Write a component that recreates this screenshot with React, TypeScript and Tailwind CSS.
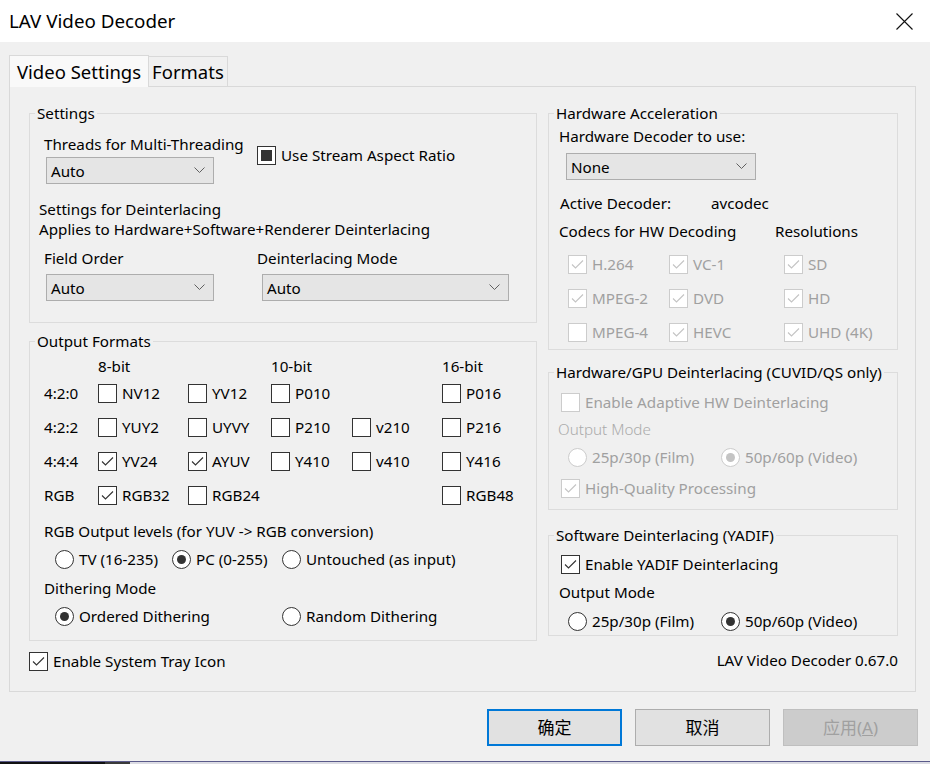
import React from 'react';

const FONT = "font-['Segoe_UI','Noto_Sans','Noto_Sans_CJK_SC',sans-serif]";

const Check: React.FC<{
  label: string;
  checked?: boolean;
  mixed?: boolean;
  disabled?: boolean;
  className?: string;
}> = ({ label, checked, mixed, disabled, className = '' }) => {
  const stroke = disabled ? '#c4c4c4' : '#333333';
  return (
    <div className={`flex items-center h-[20px] whitespace-nowrap ${className}`}>
      <span
        className={`w-[19px] h-[19px] shrink-0 border bg-white flex items-center justify-center ${
          disabled ? 'border-[#cccccc]' : 'border-[#333333]'
        }`}
      >
        {checked && (
          <svg width="17" height="17" viewBox="0 0 17 17">
            <polyline points="3,8.5 6.5,12 14,4.5" fill="none" stroke={stroke} strokeWidth="1.1" />
          </svg>
        )}
        {mixed && <span className="w-[11px] h-[11px] bg-[#333333]" />}
      </span>
      <span className={`ml-[5px] ${disabled ? 'text-[#a0a0a0]' : 'text-black'}`}>{label}</span>
    </div>
  );
};

const Radio: React.FC<{ label: string; selected?: boolean; disabled?: boolean; className?: string }> = ({
  label,
  selected,
  disabled,
  className = '',
}) => (
  <div className={`flex items-center h-[20px] whitespace-nowrap ${className}`}>
    <span
      className={`w-[19px] h-[19px] shrink-0 rounded-full border bg-white flex items-center justify-center ${
        disabled ? 'border-[#cccccc]' : 'border-[#333333]'
      }`}
    >
      {selected && (
        <span className={`w-[9px] h-[9px] rounded-full ${disabled ? 'bg-[#c4c4c4]' : 'bg-[#333333]'}`} />
      )}
    </span>
    <span className={`ml-[5px] ${disabled ? 'text-[#a0a0a0]' : 'text-black'}`}>{label}</span>
  </div>
);

const Combo: React.FC<{ value: string; className?: string }> = ({ value, className = '' }) => (
  <div
    className={`h-[27px] bg-[#e5e5e5] border border-[#adadad] flex items-center justify-between pl-[4px] pr-[8px] ${className}`}
  >
    <span>{value}</span>
    <svg width="11" height="7" viewBox="0 0 11 7">
      <polyline points="0.5,0.5 5.5,5.5 10.5,0.5" fill="none" stroke="#606060" strokeWidth="1" />
    </svg>
  </div>
);

const Group: React.FC<{ title: string; className?: string; children: React.ReactNode }> = ({
  title,
  className = '',
  children,
}) => (
  <fieldset className={`border border-[#dcdcdc] m-0 p-0 min-w-0 ${className}`}>
    <legend className="ml-[5px] px-[2px] leading-[20px] text-black">{title}</legend>
    {children}
  </fieldset>
);

const formatRows: { name: string; cells: ([string, boolean] | null)[] }[] = [
  { name: '4:2:0', cells: [['NV12', false], ['YV12', false], ['P010', false], null, ['P016', false]] },
  { name: '4:2:2', cells: [['YUY2', false], ['UYVY', false], ['P210', false], ['v210', false], ['P216', false]] },
  { name: '4:4:4', cells: [['YV24', true], ['AYUV', true], ['Y410', false], ['v410', false], ['Y416', false]] },
  { name: 'RGB', cells: [['RGB32', true], ['RGB24', false], null, null, ['RGB48', false]] },
];

const SettingsGroup: React.FC = () => (
  <Group title="Settings" className="h-[220px]">
    <div className="pl-[14px]">
      <div className="flex mt-[11px]">
        <div className="w-[213px]">
          <div className="h-[20px]">Threads for Multi-Threading</div>
          <Combo value="Auto" className="ml-[2px] mt-[3px] w-[168px]" />
        </div>
        <Check label="Use Stream Aspect Ratio" mixed className="mt-[11px]" />
      </div>
      <div className="-ml-[5px] mt-[15px]">
        <div className="h-[20px]">Settings for Deinterlacing</div>
        <div className="h-[20px]">Applies to Hardware+Software+Renderer Deinterlacing</div>
      </div>
      <div className="flex mt-[9px]">
        <div className="w-[213px]">
          <div className="h-[20px]">Field Order</div>
          <Combo value="Auto" className="ml-[2px] mt-[6px] w-[168px]" />
        </div>
        <div>
          <div className="h-[20px]">Deinterlacing Mode</div>
          <Combo value="Auto" className="ml-[5px] mt-[6px] w-[247px]" />
        </div>
      </div>
    </div>
  </Group>
);

const OutputFormatsGroup: React.FC = () => (
  <Group title="Output Formats" className="h-[310px] mt-[8px]">
    <div className="pl-[14px]">
      <div className="grid grid-cols-[54px_90px_83px_81px_90px_1fr] mt-[6px]">
        <div className="h-[19px]" />
        <div className="h-[19px] leading-[19px]">8-bit</div>
        <div />
        <div className="h-[19px] leading-[19px]">10-bit</div>
        <div />
        <div className="h-[19px] leading-[19px]">16-bit</div>
        {formatRows.map((row) => (
          <React.Fragment key={row.name}>
            <div className="h-[34px] flex items-center">{row.name}</div>
            {row.cells.map((c, i) => (
              <div key={i} className="h-[34px] flex items-center">
                {c && <Check label={c[0]} checked={c[1]} />}
              </div>
            ))}
          </React.Fragment>
        ))}
      </div>
      <div className="h-[20px] mt-[9px]">RGB Output levels (for YUV -&gt; RGB conversion)</div>
      <div className="flex mt-[8px] ml-[11px]">
        <Radio label="TV (16-235)" className="w-[117px]" />
        <Radio label="PC (0-255)" selected className="w-[110px]" />
        <Radio label="Untouched (as input)" />
      </div>
      <div className="h-[20px] mt-[9px]">Dithering Mode</div>
      <div className="flex mt-[8px] ml-[11px]">
        <Radio label="Ordered Dithering" selected className="w-[227px]" />
        <Radio label="Random Dithering" />
      </div>
    </div>
  </Group>
);

const HwAccelGroup: React.FC = () => (
  <Group title="Hardware Acceleration" className="h-[247px]">
    <div className="pl-[10px]">
      <div className="h-[20px] mt-[3px]">Hardware Decoder to use:</div>
      <Combo value="None" className="ml-[7px] mt-[7px] w-[190px]" />
      <div className="flex h-[20px] mt-[13px] ml-[1px]">
        <span className="w-[151px]">Active Decoder:</span>
        <span>avcodec</span>
      </div>
      <div className="flex h-[20px] mt-[8px]">
        <span className="w-[216px]">Codecs for HW Decoding</span>
        <span>Resolutions</span>
      </div>
      <div className="grid grid-cols-[101px_115px_1fr] ml-[9px] mt-[13px] gap-y-[14px]">
        <Check label="H.264" checked disabled />
        <Check label="VC-1" checked disabled />
        <Check label="SD" checked disabled />
        <Check label="MPEG-2" checked disabled />
        <Check label="DVD" checked disabled />
        <Check label="HD" checked disabled />
        <Check label="MPEG-4" disabled />
        <Check label="HEVC" checked disabled />
        <Check label="UHD (4K)" checked disabled />
      </div>
    </div>
  </Group>
);

const GpuDeintGroup: React.FC = () => (
  <Group title="Hardware/GPU Deinterlacing (CUVID/QS only)" className="h-[148px] mt-[12px]">
    <div className="pl-[12px]">
      <Check label="Enable Adaptive HW Deinterlacing" disabled className="mt-[10px]" />
      <div className="h-[20px] mt-[7px] -ml-[3px] font-light text-[#ababab]">Output Mode</div>
      <div className="flex mt-[8px] ml-[7px]">
        <Radio label="25p/30p (Film)" disabled className="w-[153px]" />
        <Radio label="50p/60p (Video)" selected disabled />
      </div>
      <Check label="High-Quality Processing" checked disabled className="mt-[11px]" />
    </div>
  </Group>
);

const SwDeintGroup: React.FC = () => (
  <Group title="Software Deinterlacing (YADIF)" className="h-[111px] mt-[15px]">
    <div className="pl-[12px]">
      <Check label="Enable YADIF Deinterlacing" checked className="mt-[9px]" />
      <div className="h-[20px] mt-[8px] -ml-[2px]">Output Mode</div>
      <div className="flex mt-[9px] ml-[7px]">
        <Radio label="25p/30p (Film)" className="w-[153px]" />
        <Radio label="50p/60p (Video)" selected />
      </div>
    </div>
  </Group>
);

export default function App() {
  return (
    <div
      className={`w-[930px] h-[764px] bg-[#f0f0f0] flex flex-col overflow-hidden text-[15.2px] leading-[20px] text-black ${FONT}`}
    >
      <div className="h-[42px] bg-white flex items-center justify-between pl-[9px] pr-[17px] shrink-0">
        <span className="text-[18.8px]">LAV Video Decoder</span>
        <svg width="17" height="17" viewBox="0 0 17 17">
          <path d="M0.5 0.5 L16.5 16.5 M16.5 0.5 L0.5 16.5" stroke="#111111" strokeWidth="1.1" />
        </svg>
      </div>

      <div className="pl-[9px] pr-[14px] pt-[13px]">
        <div className="flex items-end h-[31px] text-[18.5px]">
          <div className="h-[32px] -mb-px relative z-10 bg-[#f9f9f9] border border-b-0 border-[#d9d9d9] px-[7px] flex items-center">
            Video Settings
          </div>
          <div className="h-[30px] bg-[#f0f0f0] border border-l-0 border-b-0 border-[#d9d9d9] px-[3px] flex items-center">
            Formats
          </div>
        </div>
        <div className="h-[606px] border border-[#d9d9d9] bg-[#f0f0f0] pl-[19px] pr-[17px] pt-[16px] flex flex-col">
          <div className="flex gap-[11px]">
            <div className="w-[508px]">
              <SettingsGroup />
              <OutputFormatsGroup />
            </div>
            <div className="w-[350px]">
              <HwAccelGroup />
              <GpuDeintGroup />
              <SwDeintGroup />
            </div>
          </div>
          <div className="flex items-center justify-between mt-[10px] h-[20px]">
            <Check label="Enable System Tray Icon" checked />
            <span className="-mt-[3px]">LAV Video Decoder 0.67.0</span>
          </div>
        </div>
      </div>

      <div className="flex justify-end gap-[13px] pr-[12px] mt-[17px] text-[17px]">
        <button className="w-[135px] h-[37px] bg-[#e1e1e1] border-2 border-[#0078d7]">确定</button>
        <button className="w-[135px] h-[37px] bg-[#e1e1e1] border border-[#adadad]">取消</button>
        <button className="w-[135px] h-[37px] bg-[#cccccc] border border-[#bfbfbf] text-[#a0a0a0]">
          应用(<span className="underline">A</span>)
        </button>
      </div>

      <div className="mt-auto h-[3px] flex border-t border-[#5a5a8a]">
        <div className="w-[105px] bg-[#111111]" />
        <div className="w-[25px] bg-[#3a3a3a]" />
        <div className="flex-1 bg-[#dcdce4]" />
      </div>
    </div>
  );
}
